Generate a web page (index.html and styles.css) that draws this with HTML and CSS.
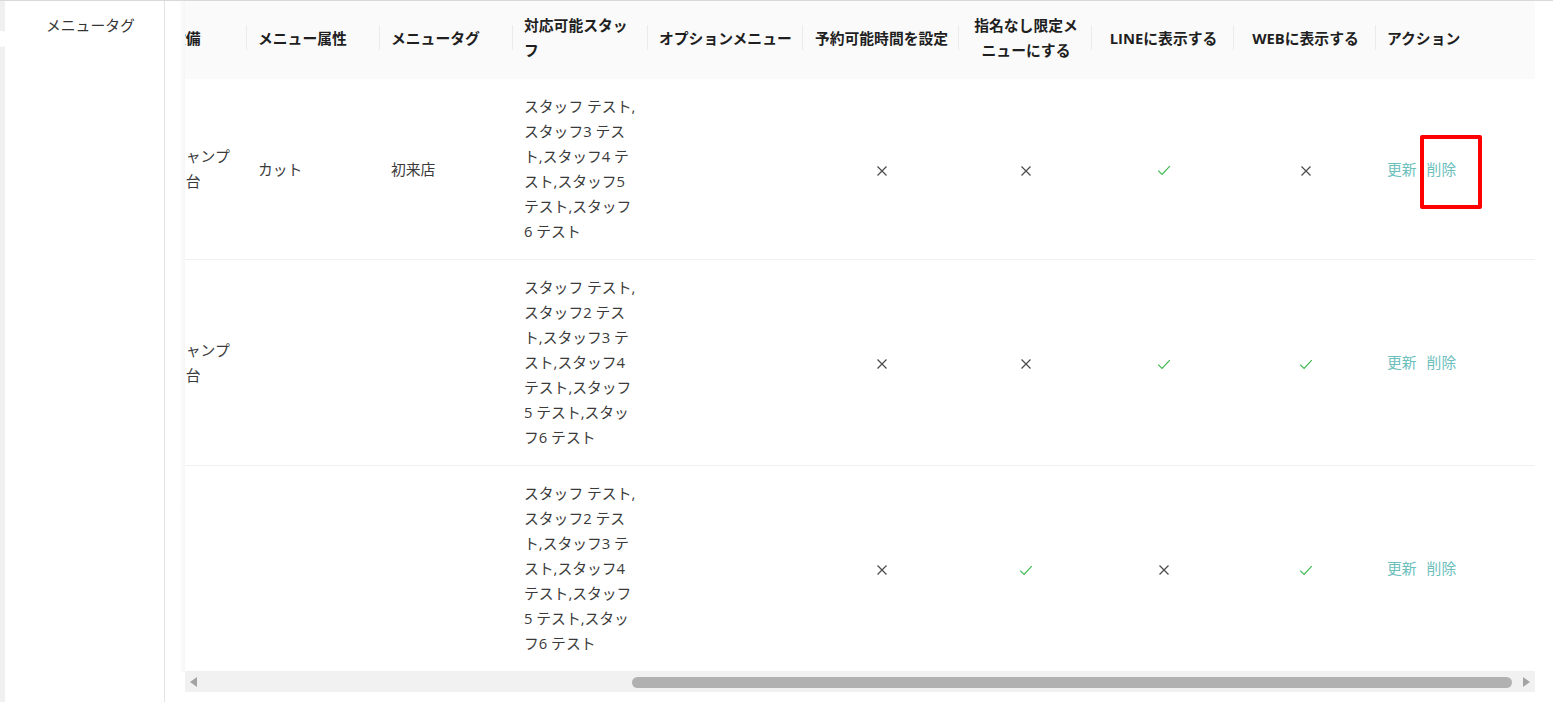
FILE: index.html
```html
<!DOCTYPE html>
<html lang="ja">
<head>
    <meta charset="UTF-8">
    <meta name="viewport" content="width=device-width, initial-scale=1.0">
    <title>メニュータグ</title>
    <link rel="stylesheet" href="styles.css">
</head>
<body>
    <div class="page">
        <aside class="sidebar">
            <div class="sidebar-item">メニュータグ</div>
        </aside>
        <main class="content">
            <div class="table-wrap">
                <div class="table-scroll">
                    <table class="menu-table">
                        <colgroup>
                            <col style="width: 87px">
                            <col style="width: 133px">
                            <col style="width: 133px">
                            <col style="width: 135px">
                            <col style="width: 155px">
                            <col style="width: 156px">
                            <col style="width: 133px">
                            <col style="width: 142px">
                            <col style="width: 142px">
                            <col style="width: 170px">
                        </colgroup>
                        <thead>
                            <tr>
                                <th>設備</th>
                                <th>メニュー属性</th>
                                <th>メニュータグ</th>
                                <th>対応可能スタッフ</th>
                                <th>オプションメニュー</th>
                                <th class="center">予約可能時間を設定</th>
                                <th class="center">指名なし限定メニューにする</th>
                                <th class="center">LINEに表示する</th>
                                <th class="center">WEBに表示する</th>
                                <th>アクション</th>
                            </tr>
                        </thead>
                        <tbody>
                            <tr>
                                <td>シャンプー台</td>
                                <td>カット</td>
                                <td>初来店</td>
                                <td>スタッフ テスト,スタッフ3 テスト,スタッフ4 テスト,スタッフ5 テスト,スタッフ6 テスト</td>
                                <td></td>
                                <td class="center"><span class="icon-no"></span></td>
                                <td class="center"><span class="icon-no"></span></td>
                                <td class="center"><span class="icon-yes"></span></td>
                                <td class="center"><span class="icon-no"></span></td>
                                <td><div class="actions"><a href="#">更新</a><a href="#">削除</a></div></td>
                            </tr>
                            <tr>
                                <td>シャンプー台</td>
                                <td></td>
                                <td></td>
                                <td>スタッフ テスト,スタッフ2 テスト,スタッフ3 テスト,スタッフ4 テスト,スタッフ5 テスト,スタッフ6 テスト</td>
                                <td></td>
                                <td class="center"><span class="icon-no"></span></td>
                                <td class="center"><span class="icon-no"></span></td>
                                <td class="center"><span class="icon-yes"></span></td>
                                <td class="center"><span class="icon-yes"></span></td>
                                <td><div class="actions"><a href="#">更新</a><a href="#">削除</a></div></td>
                            </tr>
                            <tr>
                                <td></td>
                                <td></td>
                                <td></td>
                                <td>スタッフ テスト,スタッフ2 テスト,スタッフ3 テスト,スタッフ4 テスト,スタッフ5 テスト,スタッフ6 テスト</td>
                                <td></td>
                                <td class="center"><span class="icon-no"></span></td>
                                <td class="center"><span class="icon-yes"></span></td>
                                <td class="center"><span class="icon-no"></span></td>
                                <td class="center"><span class="icon-yes"></span></td>
                                <td><div class="actions"><a href="#">更新</a><a href="#">削除</a></div></td>
                            </tr>
                        </tbody>
                    </table>
                </div>
                <div class="scrollbar">
                    <span class="scroll-arrow"><span class="arrow-left"></span></span>
                    <div class="scroll-track">
                        <div class="scroll-thumb" style="margin-left: 430px; width: 880px"></div>
                    </div>
                    <span class="scroll-arrow"><span class="arrow-right"></span></span>
                </div>
            </div>
        </main>
        <div class="highlight"></div>
    </div>

    <script>
        // アイコンを描画
        const crossSvg = '<svg width="12" height="12" viewBox="0 0 12 12"><path d="M1.5 1.5l9 9M10.5 1.5l-9 9" stroke="#4a4a4a" stroke-width="1.2" fill="none"/></svg>';
        const checkSvg = '<svg width="14" height="11" viewBox="0 0 14 11"><path d="M1.2 5.6l3.9 3.9L12.8 1.2" stroke="#3fb950" stroke-width="1.2" fill="none"/></svg>';

        document.querySelectorAll('.icon-no').forEach(el => el.innerHTML = crossSvg);
        document.querySelectorAll('.icon-yes').forEach(el => el.innerHTML = checkSvg);
    </script>
</body>
</html>
```

FILE: styles.css
```css
body {
    margin: 0;
    font-family: 'Open Sans', 'Noto Sans CJK JP', sans-serif;
    font-size: 14.8px;
    color: #333;
    background-color: #fff;
}
.page {
    display: flex;
    position: relative;
    height: 702px;
    border-top: 1px solid #d9d9d9;
    box-sizing: border-box;
    overflow: hidden;
}
.sidebar {
    position: relative;
    flex-shrink: 0;
    width: 159px;
    border-left: 5px solid #f0f0f0;
    border-right: 1px solid #e4e4e4;
}
.sidebar::before {
    content: "";
    position: absolute;
    left: -9px;
    top: 30px;
    width: 12px;
    height: 16px;
    border-radius: 50%;
    background-color: #fff;
}
.sidebar-item {
    padding: 12px 0 0 41px;
    line-height: 25px;
    color: #333;
}
.content {
    flex: 1;
    min-width: 0;
    padding: 0 18px 0 20px;
}
.table-wrap {
    position: relative;
}
.table-wrap::before {
    content: "";
    position: absolute;
    left: -6px;
    top: 0;
    bottom: 20px;
    width: 6px;
    background: linear-gradient(to right, rgba(0,0,0,0), rgba(0,0,0,0.04));
}
.table-scroll {
    overflow: hidden;
}
.menu-table {
    table-layout: fixed;
    border-collapse: separate;
    border-spacing: 0;
    width: 1386px;
    margin-left: -25px;
}
.menu-table th, .menu-table td {
    line-height: 25px;
    text-align: left;
    vertical-align: middle;
}
.menu-table th {
    position: relative;
    padding: 12px 10px 16px 11px;
    background-color: #fafafa;
    color: #1f1f1f;
    font-weight: 700;
}
.menu-table th:not(:last-child)::after {
    content: "";
    position: absolute;
    right: 0;
    top: 24px;
    width: 1px;
    height: 25px;
    background-color: #ebebeb;
}
.menu-table td {
    padding: 15px 10px 15px 11px;
    border-bottom: 1px solid #f0f0f0;
    color: #3a3a3a;
}
.menu-table .center {
    text-align: center;
}
.icon-no svg, .icon-yes svg {
    display: inline-block;
    vertical-align: middle;
}
.actions {
    display: flex;
    gap: 10px;
}
.actions a {
    color: #6cc0bc;
    text-decoration: none;
}
.scrollbar {
    display: flex;
    align-items: center;
    height: 20px;
    background-color: #f1f1f1;
}
.scroll-arrow {
    display: flex;
    justify-content: center;
    align-items: center;
    width: 17px;
    height: 100%;
}
.arrow-left {
    border-top: 5px solid transparent;
    border-bottom: 5px solid transparent;
    border-right: 7px solid #a3a3a3;
}
.arrow-right {
    border-top: 5px solid transparent;
    border-bottom: 5px solid transparent;
    border-left: 7px solid #a3a3a3;
}
.scroll-track {
    display: flex;
    align-items: center;
    flex: 1;
    height: 100%;
}
.scroll-thumb {
    height: 11px;
    border-radius: 6px;
    background-color: #b1b1b1;
}
.highlight {
    position: absolute;
    left: 1420px;
    top: 134px;
    width: 54px;
    height: 66px;
    border: 4px solid #ff0000;
    border-radius: 2px;
}
```
